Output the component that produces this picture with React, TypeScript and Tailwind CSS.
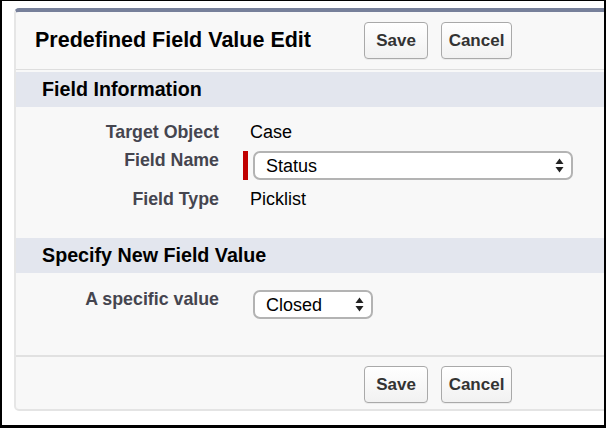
const Button = ({ label, w }: { label: string; w: string }) => (
  <button
    className={`${w} h-[37px] rounded-[4px] border border-[#a9a9a9] bg-gradient-to-b from-white to-[#f1f1f1] text-[17px] font-bold text-[#333] shadow-[0_1px_0_rgba(0,0,0,0.05)]`}
  >
    {label}
  </button>
);

const Arrows = () => (
  <svg width="9" height="15" viewBox="0 0 9 15" className="shrink-0">
    <polygon points="0.5,6 4.5,0.5 8.5,6" fill="#222" />
    <polygon points="0.5,9 4.5,14.5 8.5,9" fill="#222" />
  </svg>
);

const Select = ({ value, w }: { value: string; w: string }) => (
  <div
    className={`${w} h-[29px] flex items-center justify-between rounded-[7px] border-2 border-[#b3b3b3] bg-white pl-[11px] pr-[7px] text-[18px] text-black`}
  >
    <span className="leading-none">{value}</span>
    <Arrows />
  </div>
);

const SectionBar = ({ title }: { title: string }) => (
  <div className="h-[35px] flex items-center bg-[#e3e6ee] pl-[26px] text-[19.7px] font-bold text-black">
    {title}
  </div>
);

const Label = ({ children, extra = '' }: { children: string; extra?: string }) => (
  <div className={`w-[203px] shrink-0 text-right text-[17.8px] font-bold leading-[20px] text-[#45454f] ${extra}`}>
    {children}
  </div>
);

export default function App() {
  return (
    <div
      className="h-[428px] w-[606px] overflow-hidden border-t border-l-2 border-r-2 border-b-[3px] border-black bg-white pl-3 pt-[7px]"
      style={{ fontFamily: '"Liberation Sans", Arial, sans-serif' }}
    >
      <div className="-mr-3 h-[403px] flex flex-col rounded-[5px] border-t-[4px] border-l-2 border-b-2 border-t-[#77809a] border-l-[#e6e6e6] border-b-[#e4e4e4] bg-[#f8f8f8]">
        {/* Header */}
        <div className="h-[58px] shrink-0 flex items-center border-b border-[#dedede] pl-[19px]">
          <div className="w-[329px] text-[21.5px] font-bold text-black">Predefined Field Value Edit</div>
          <div className="flex gap-[13px]">
            <Button label="Save" w="w-[64px]" />
            <Button label="Cancel" w="w-[71px]" />
          </div>
        </div>

        <div className="mt-[2px]">
          <SectionBar title="Field Information" />
        </div>

        <div className="flex flex-col pt-[15px]">
          <div className="flex">
            <Label>Target Object</Label>
            <div className="ml-[31px] text-[18px] leading-[20px] text-black">Case</div>
          </div>
          <div className="mt-[9px] flex items-start">
            <Label extra="-mt-[1px]">Field Name</Label>
            <div className="ml-[24px] flex items-center gap-[5px]">
              <div className="h-[29px] w-[5px] bg-[#c00000]" />
              <Select value="Status" w="w-[320px]" />
            </div>
          </div>
          <div className="mt-[9px] flex">
            <Label>Field Type</Label>
            <div className="ml-[31px] text-[18px] leading-[20px] text-black">Picklist</div>
          </div>
        </div>

        <div className="mt-[29px]">
          <SectionBar title="Specify New Field Value" />
        </div>

        <div className="mt-[17px] flex items-start">
          <Label extra="-mt-[1px]">A specific value</Label>
          <div className="ml-[34px]">
            <Select value="Closed" w="w-[120px]" />
          </div>
        </div>

        <div className="flex-1" />

        {/* Footer */}
        <div className="h-[54px] shrink-0 border-t-2 border-[#e1e1e1] pl-[348px] pt-[9px]">
          <div className="flex gap-[13px]">
            <Button label="Save" w="w-[64px]" />
            <Button label="Cancel" w="w-[71px]" />
          </div>
        </div>
      </div>
    </div>
  );
}
